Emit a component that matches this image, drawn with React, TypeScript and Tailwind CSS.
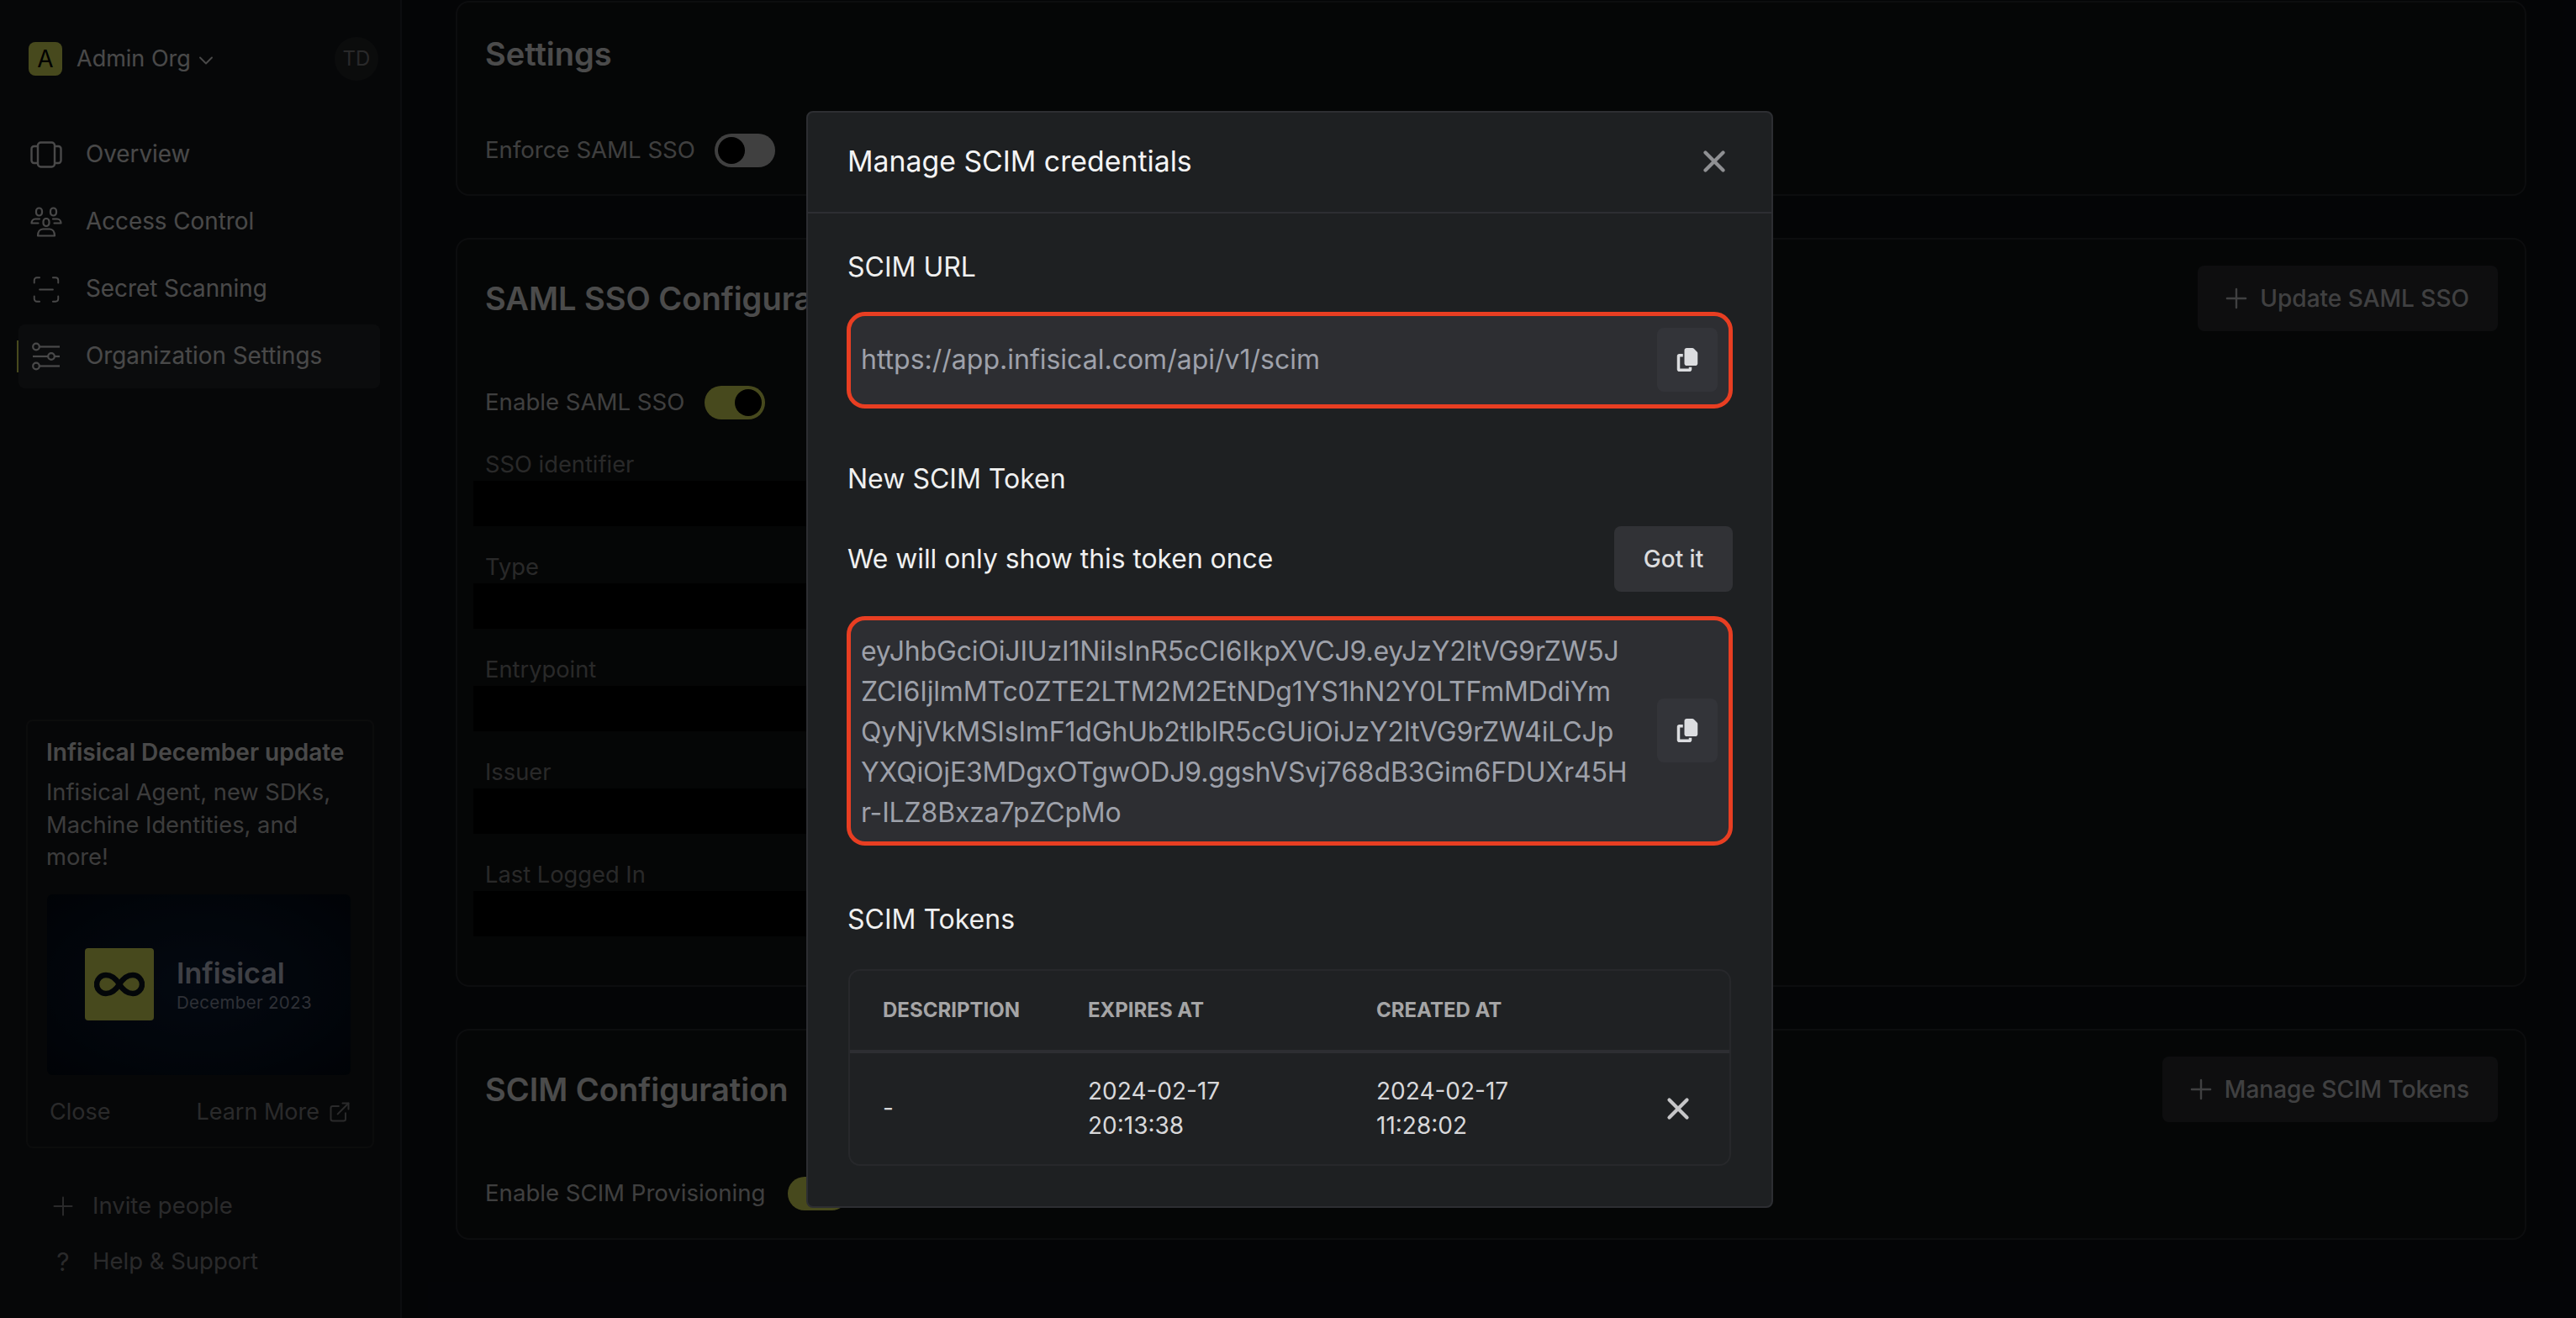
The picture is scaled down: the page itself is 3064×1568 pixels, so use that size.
import React from "react";
import { Plus, ChevronDown, ExternalLink, ScanLine, X } from "lucide-react";
import { FaCopy } from "react-icons/fa6";

const TOKEN = [
  "eyJhbGciOiJIUzI1NiIsInR5cCI6IkpXVCJ9.eyJzY2ltVG9rZW5J",
  "ZCI6IjlmMTc0ZTE2LTM2M2EtNDg1YS1hN2Y0LTFmMDdiYm",
  "QyNjVkMSIsImF1dGhUb2tlblR5cGUiOiJzY2ltVG9rZW4iLCJp",
  "YXQiOjE3MDgxOTgwODJ9.ggshVSvj768dB3Gim6FDUXr45H",
  "r-ILZ8Bxza7pZCpMo",
];

const OverviewIcon = () => (
  <svg width="38" height="32" viewBox="0 0 38 32" fill="none" stroke="currentColor" strokeWidth="2.4" strokeLinejoin="round">
    <rect x="9" y="1.500" width="20" height="29" rx="3.500" />
    <path d="M9 6H4.500A3 3 0 0 0 1.500 9v14a3 3 0 0 0 3 3H9" />
    <path d="M29 6h4.500a3 3 0 0 1 3 3v14a3 3 0 0 1-3 3H29" />
  </svg>
);

const AccessIcon = () => (
  <svg width="38" height="36" viewBox="0 0 38 36" fill="none" stroke="currentColor" strokeWidth="2.2" strokeLinecap="round" strokeLinejoin="round">
    <rect x="7" y="1.500" width="7" height="9" rx="3.500" />
    <rect x="24" y="1.500" width="7" height="9" rx="3.500" />
    <rect x="15.500" y="14" width="7" height="9" rx="3.500" />
    <path d="M11 14.500H6c-2.500 0-4.500 2-4.500 5h8" />
    <path d="M27 14.500h5c2.500 0 4.500 2 4.500 5h-8" />
    <path d="M9 34.500c0-5 2.500-8 6-8h8c3.500 0 6 3 6 8z" />
  </svg>
);

const SlidersIcon = () => (
  <svg width="34" height="34" viewBox="0 0 34 34" fill="none" stroke="currentColor" strokeWidth="2.2">
    <circle cx="5" cy="5.500" r="3.800" />
    <path d="M9 5.500h24" />
    <path d="M1 17h18" />
    <circle cx="23" cy="17" r="3.800" />
    <path d="M27 17h6" />
    <circle cx="5" cy="28.500" r="3.800" />
    <path d="M9 28.500h24" />
  </svg>
);

const Toggle = ({ on }: { on?: boolean }) => (
  <div
    className={
      on
        ? "w-[72px] h-[40px] shrink-0 rounded-full bg-[#eef561] p-[4px] flex justify-end"
        : "w-[72px] h-[40px] shrink-0 rounded-full bg-[#d6d6d6] p-[4px] flex justify-start"
    }
  >
    <div className="w-[32px] h-[32px] rounded-full bg-black" />
  </div>
);

const NavRow = ({ icon, label, active }: { icon: React.ReactNode; label: string; active?: boolean }) => (
  <div
    className={
      active
        ? "relative h-[76px] ml-[22px] mr-[24px] pl-[14px] rounded-[8px] flex items-center bg-[#272a2e] text-[#f4f4f5]"
        : "h-[76px] ml-[22px] mr-[24px] pl-[14px] rounded-[8px] flex items-center text-[#f4f4f5]"
    }
  >
    {active && <div className="absolute left-[-2px] top-[19px] w-[2px] h-[38px] bg-[#eef561]" />}
    <div className="w-[38px] flex justify-center">{icon}</div>
    <span className="ml-[28px] text-[27.8px]">{label}</span>
  </div>
);

const Field = ({ label }: { label: string }) => (
  <div className="mb-[32px]">
    <div className="pl-[14px] h-[34px] mb-[2px] flex items-center text-[27.3px] text-[#8a8a8a]">{label}</div>
    <div className="w-[1400px] h-[54px] bg-black" />
  </div>
);

const GhostButton = ({ label }: { label: string }) => (
  <div className="h-[78px] pl-[27px] pr-[34px] rounded-[8px] bg-[#2f3135] text-[#d8d8da] flex items-center gap-[9px] text-[28px] font-medium">
    <Plus size={38} strokeWidth={1.5} />
    {label}
  </div>
);

const CopyButton = () => (
  <div className="w-[72px] h-[76px] shrink-0 rounded-[8px] bg-[#333439] text-[#dcdde0] flex items-center justify-center">
    <FaCopy size={28} />
  </div>
);

export default function App() {
  return (
    <div className="relative w-[3064px] h-[1568px] overflow-hidden bg-[#0e1116] flex font-['Inter',sans-serif]">
      <aside className="w-[478px] h-full shrink-0 bg-[#17191c] border-r-2 border-[#2b2e33] flex flex-col">
        <div className="h-[52px] mt-[44px] pl-[34px] pr-[26px] flex items-center">
          <div className="w-[40px] h-[40px] rounded-[8px] bg-[#eef561] text-black flex items-center justify-center text-[28px]">A</div>
          <span className="ml-[17px] text-[27px] text-[#f4f4f5]">Admin Org</span>
          <ChevronDown size={28} strokeWidth={1.6} className="ml-[4px] mt-[4px] text-[#f4f4f5]" />
          <div className="ml-auto w-[52px] h-[52px] rounded-full bg-[#26282b] text-[#8a8a8c] flex items-center justify-center text-[24px]">TD</div>
        </div>
        <nav className="mt-[50px] flex flex-col gap-[4px]">
          <NavRow icon={<OverviewIcon />} label="Overview" />
          <NavRow icon={<AccessIcon />} label="Access Control" />
          <NavRow icon={<ScanLine size={45} strokeWidth={1.2} />} label="Secret Scanning" />
          <NavRow icon={<SlidersIcon />} label="Organization Settings" active />
        </nav>
        <div className="mt-auto pb-[34px]">
          <div className="mx-[31px] mb-[36px] h-[510px] px-[22px] pt-[18px] rounded-[8px] bg-[#17181b] border-2 border-[#26282b] flex flex-col">
            <div className="h-[38px] flex items-center text-[28px] font-semibold text-[#f4f4f5] whitespace-nowrap">Infisical December update</div>
            <p className="mt-[10px] text-[27.3px] leading-[38.5px] text-[#c8c8ca]">Infisical Agent, new SDKs, Machine Identities, and more!</p>
            <div className="mt-[24px] ml-[1px] mr-[4px] h-[215px] rounded-[6px] bg-[radial-gradient(ellipse_at_center,#0e1e38_0%,#061122_70%,#030a16_100%)] flex items-center pl-[45px] gap-[27px]">
              <div className="w-[82px] h-[86px] rounded-[4px] bg-[#eef561] flex items-center justify-center">
                <svg width="60" height="30" viewBox="0 0 60 30" fill="none" stroke="#0c1420" strokeWidth="6.500">
                  <path d="M30 15C25 7 20 4 14 4a11 11 0 0 0 0 22c6 0 11-3 16-11s10-11 16-11a11 11 0 0 1 0 22c-6 0-11-3-16-11z" />
                </svg>
              </div>
              <div className="flex flex-col">
                <span className="text-[34px] leading-[44px] font-semibold text-[#d3d8e6]">Infisical</span>
                <span className="text-[20.5px] leading-[26px] text-[#9aa0b4] tracking-[0.3px]">December 2023</span>
              </div>
            </div>
            <div className="mt-[24px] pl-[4px] pr-[3px] flex items-center justify-between text-[27px] text-[#8e8e90]">
              <span>Close</span>
              <span className="flex items-center gap-[10px]">
                Learn More <ExternalLink size={28} strokeWidth={1.7} />
              </span>
            </div>
          </div>
          <div className="h-[66px] pl-[64px] flex items-center text-[27.5px] text-[#8e8e90]">
            <Plus size={36} strokeWidth={1.3} className="-ml-[7px]" />
            <span className="ml-[17px]">Invite people</span>
          </div>
          <div className="h-[66px] pl-[64px] flex items-center text-[27.5px] text-[#8e8e90]">
            <span className="w-[22px] text-center text-[30px]">?</span>
            <span className="ml-[24px]">Help &amp; Support</span>
          </div>
        </div>
      </aside>

      <main className="flex-1 pt-[1px] pl-[64px] pr-[59px] flex flex-col gap-[50px]">
        <section className="h-[232px] rounded-[16px] bg-[#121416] border-2 border-[#2a2c30] px-[33px] pt-[41px]">
          <h2 className="h-[40px] flex items-center text-[38px] font-semibold text-[#fafafa]">Settings</h2>
          <div className="mt-[74px] flex items-center gap-[23px] text-[27.6px] text-[#d4d4d4]">
            Enforce SAML SSO
            <Toggle />
          </div>
        </section>

        <section className="h-[891px] rounded-[16px] bg-[#121416] border-2 border-[#2a2c30] pl-[33px] pr-[32px] pt-[31px]">
          <div className="flex items-center justify-between">
            <h2 className="text-[38px] font-semibold text-[#fafafa]">SAML SSO Configuration</h2>
            <GhostButton label="Update SAML SSO" />
          </div>
          <div className="mt-[64px] flex items-center gap-[24px] text-[27.6px] text-[#d4d4d4]">
            Enable SAML SSO
            <Toggle on />
          </div>
          <div className="mt-[37px] -ml-[14px]">
            <Field label="SSO identifier" />
            <Field label="Type" />
            <Field label="Entrypoint" />
            <Field label="Issuer" />
            <Field label="Last Logged In" />
          </div>
        </section>

        <section className="h-[251px] rounded-[16px] bg-[#121416] border-2 border-[#2a2c30] pl-[33px] pr-[32px] pt-[31px]">
          <div className="flex items-center justify-between">
            <h2 className="text-[38px] font-semibold text-[#fafafa]">SCIM Configuration</h2>
            <GhostButton label="Manage SCIM Tokens" />
          </div>
          <div className="mt-[64px] flex items-center gap-[26px] text-[27.6px] text-[#d4d4d4]">
            Enable SCIM Provisioning
            <Toggle on />
          </div>
        </section>
      </main>

      {/* dim layer + dialog */}
      <div className="absolute inset-0 pl-[4px] bg-black/70 flex items-center justify-center">
        <div className="w-[1150px] h-[1305px] rounded-[8px] bg-[#1e2022] border-2 border-[#2d2e32] flex flex-col">
          <div className="h-[120px] shrink-0 pl-[47px] pr-[47px] flex items-center justify-between border-b-2 border-[#2d2e32]">
            <span className="text-[33.8px] text-[#f4f4f5]">Manage SCIM credentials</span>
            <X size={42} strokeWidth={2.4} className="mb-[2px] text-[#8f9093]" />
          </div>

          <div className="px-[46px] flex flex-col">
            <div className="mt-[42px] pl-[1px] h-[44px] flex items-center text-[32px] text-[#f0f0f0]">SCIM URL</div>
            <div className="mt-[31px] h-[115px] pl-[12px] pr-[13px] rounded-[22px] border-[5px] border-[#e83e22] bg-[#2d2e32] flex items-center justify-between">
              <span className="text-[32px] text-[#9ea1aa]">https://app.infisical.com/api/v1/scim</span>
              <CopyButton />
            </div>

            <div className="mt-[62px] pl-[1px] h-[44px] flex items-center text-[32px] text-[#f0f0f0]">New SCIM Token</div>
            <div className="mt-[34px] pl-[1px] flex items-center justify-between">
              <span className="text-[31.8px] text-[#f0f0f0]">We will only show this token once</span>
              <div className="w-[141px] h-[78px] rounded-[8px] bg-[#313236] text-[#dcdcde] flex items-center justify-center text-[28px] font-medium">Got it</div>
            </div>
            <div className="mt-[29px] h-[273px] pl-[12px] pr-[13px] rounded-[22px] border-[5px] border-[#e83e22] bg-[#2d2e32] flex items-center justify-between">
              <div className="pt-[3px] text-[32px] leading-[48px] tracking-[-0.16px] text-[#9ea1aa] whitespace-pre">{TOKEN.join("\n")}</div>
              <CopyButton />
            </div>

            <div className="mt-[66px] pl-[1px] h-[44px] flex items-center text-[32px] text-[#f0f0f0]">SCIM Tokens</div>
            <div className="mt-[37px] mx-[2px] h-[234px] rounded-[14px] bg-[#1f2123] border-2 border-[#27282b] flex flex-col">
              <div className="h-[98px] shrink-0 flex items-center border-b-4 border-[#2d2e32] text-[24px] font-bold text-[#a5a5a6]">
                <div className="pl-[39px] w-[283px]">DESCRIPTION</div>
                <div className="w-[343px]">EXPIRES AT</div>
                <div>CREATED AT</div>
              </div>
              <div className="flex-1 flex items-center text-[28px] leading-[41px] text-[#d8d8da]">
                <div className="pl-[39px] w-[283px]">-</div>
                <div className="w-[343px]">2024-02-17<br />20:13:38</div>
                <div className="w-[338px]">2024-02-17<br />11:28:02</div>
                <X size={42} strokeWidth={2.4} className="text-[#c6c6c8]" />
              </div>
            </div>
          </div>
        </div>
      </div>
    </div>
  );
}
